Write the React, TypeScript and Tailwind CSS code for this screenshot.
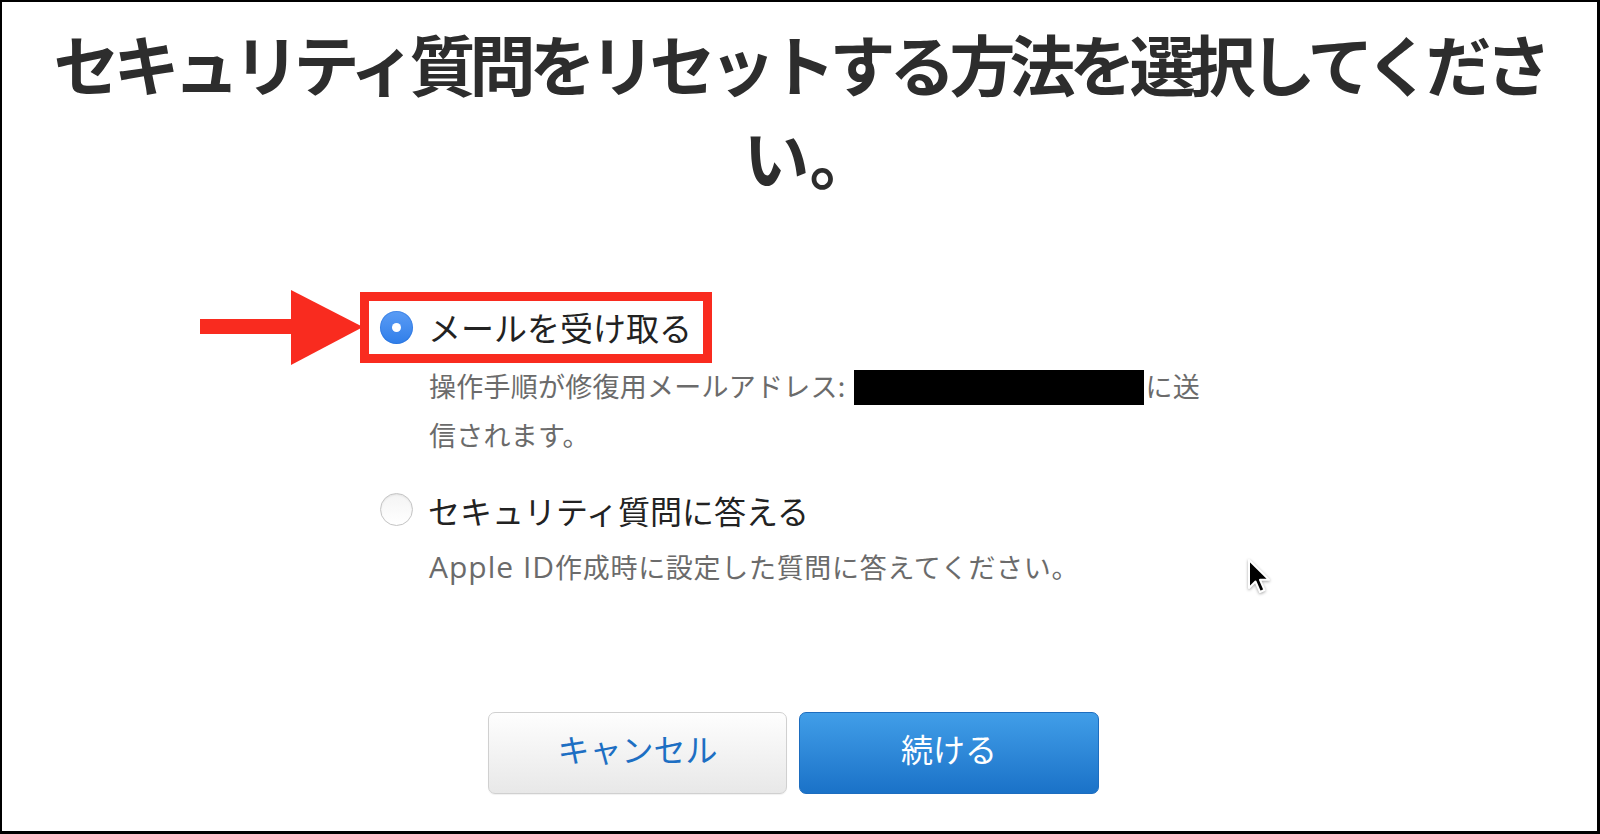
import React from "react";

function RadioOn() {
  return (
    <span className="flex h-[33px] w-[33px] shrink-0 items-center justify-center rounded-full bg-gradient-to-b from-[#5a9cf5] to-[#2f7ee9] shadow-[inset_0_0_0_1px_rgba(30,100,210,0.35)]">
      <span className="h-[9px] w-[9px] rounded-full bg-white" />
    </span>
  );
}

function RadioOff() {
  return (
    <span className="block h-[33px] w-[33px] shrink-0 rounded-full border border-[#c4c4c4] bg-gradient-to-b from-[#f4f4f4] to-white shadow-[inset_0_1px_2px_rgba(0,0,0,0.08)]" />
  );
}

export default function App() {
  const font = '"Noto Sans CJK JP", "Noto Sans", sans-serif';
  return (
    <div
      className="relative h-[834px] w-[1600px] overflow-hidden border-b-[3px] border-l-2 border-r-[3px] border-t-2 border-black bg-white"
      style={{ fontFamily: font }}
    >
      <h1 className="pt-[14px] text-center text-[66px] font-bold leading-[93px] tracking-[-6px] text-[#2d2d2d]">
        セキュリティ質問をリセットする方法を選択してくださ
        <br />
        <span className="inline-block pl-[20px] tracking-[0px]">い。</span>
      </h1>

      <div className="mt-[90px] pl-[358px]">
        <div className="inline-flex h-[71px] items-center border-[9px] border-[#f92b1f] pl-[11px] pr-[11px]">
          <RadioOn />
          <span className="ml-[15px] text-[33px] leading-none text-[#222]">メールを受け取る</span>
        </div>
        <p className="-mt-[2px] pl-[69px] text-[27px] leading-[49px] tracking-[0.25px] text-[#6b6b6b]">
          操作手順が修復用メールアドレス:
          <span className="ml-[8px] mr-[2px] inline-block h-[35px] w-[290px] bg-black align-[-8px]" />
          に送
          <br />
          信されます。
        </p>

        <div className="mt-[15px] inline-flex h-[71px] items-center border-[9px] border-transparent pl-[11px] pr-[11px]">
          <RadioOff />
          <span className="ml-[15px] text-[32px] leading-none text-[#222]">セキュリティ質問に答える</span>
        </div>
        <p className="-mt-[3px] pl-[69px] text-[27px] leading-[49px] tracking-[0.7px] text-[#6b6b6b]">
          <span className="text-[30px] tracking-[1px]" style={{ fontFamily: '"Open Sans", "Noto Sans", sans-serif' }}>
            Apple ID
          </span>
          作成時に設定した質問に答えてください。
        </p>
      </div>

      <div className="mt-[121px] flex justify-center gap-[12px] pr-[12px]">
        <button className="flex h-[82px] w-[299px] items-center justify-center rounded-[7px] border border-[#d0d0d0] bg-gradient-to-b from-[#fefefe] to-[#e8e8e8] pb-[10px] text-[32px] text-[#1d6fc3] shadow-[0_1px_1px_rgba(0,0,0,0.06)]">
          キャンセル
        </button>
        <button className="flex h-[82px] w-[300px] items-center justify-center rounded-[7px] border border-[#1d6dbf] bg-gradient-to-b from-[#419ee8] to-[#1a72c8] pb-[10px] text-[32px] text-white">
          続ける
        </button>
      </div>

      {/* annotation arrow */}
      <svg
        className="absolute left-[198px] top-[288px]"
        width="164"
        height="76"
        viewBox="0 0 164 76"
      >
        <rect x="0" y="29" width="94" height="15" fill="#f92b1f" />
        <polygon points="91,0 163,37 91,75" fill="#f92b1f" />
      </svg>

      {/* mouse cursor */}
      <svg
        className="absolute left-[1241px] top-[552px]"
        width="30"
        height="46"
        viewBox="0 0 30 46"
      >
        <path
          d="M6 6 L6 34 L12.5 27.5 L17 38 L21.5 36 L17 25.8 L26 25.8 Z"
          fill="#000"
          stroke="#fff"
          strokeWidth="2"
          strokeLinejoin="round"
          style={{ filter: "drop-shadow(0 1px 1.5px rgba(0,0,0,0.35))" }}
        />
      </svg>
    </div>
  );
}
